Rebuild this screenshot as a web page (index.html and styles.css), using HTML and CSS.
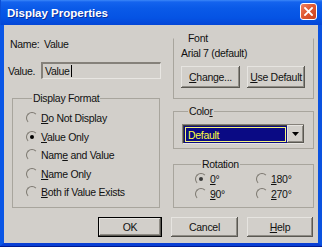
FILE: index.html
```html
<!DOCTYPE html>
<html>
<head>
<meta charset="utf-8">
<link rel="stylesheet" href="styles.css">
</head>
<body>
<div class="window">
  <div class="titlebar">
    <span class="title">Display Properties</span>
    <span class="close"><svg width="9" height="9" viewBox="0 0 9 9"><path d="M1 1 L8 8 M8 1 L1 8" stroke="#fff" stroke-width="1.8" stroke-linecap="square"/></svg></span>
  </div>
  <div class="client">
    <div class="panes">
      <div class="left">
        <div class="name-row"><span class="name-lbl">Name:</span><span>Value</span></div>
        <div class="value-row"><span class="value-lbl">Value.</span><div class="input">Value<span class="caret"></span></div></div>
        <fieldset class="group fmt">
          <legend>Display Format</legend>
          <div class="radio"><span class="rb"></span><span><u>D</u>o Not Display</span></div>
          <div class="radio"><span class="rb on"></span><span><u>V</u>alue Only</span></div>
          <div class="radio"><span class="rb"></span><span>Nam<u>e</u> and Value</span></div>
          <div class="radio"><span class="rb"></span><span><u>N</u>ame Only</span></div>
          <div class="radio"><span class="rb"></span><span><u>B</u>oth if Value Exists</span></div>
        </fieldset>
      </div>
      <div class="right">
        <fieldset class="group font">
          <legend>Font</legend>
          <div class="font-name">Arial 7 (default)</div>
          <div class="font-btns">
            <div class="btn change"><u>C</u>hange...</div>
            <div class="btn usedef"><u>U</u>se Default</div>
          </div>
        </fieldset>
        <fieldset class="group color">
          <legend>Colo<u>r</u></legend>
          <div class="combo">
            <div class="combo-field"><span>Default</span></div>
            <div class="combo-btn"><svg width="7" height="4" viewBox="0 0 7 4"><path d="M0 0 H7 L3.5 4 Z" fill="#000"/></svg></div>
          </div>
        </fieldset>
        <fieldset class="group rotation">
          <legend>Rotation</legend>
          <div class="rot-grid">
            <div class="radio rot"><span class="rb on dim"></span><span><u>0</u>°</span></div>
            <div class="radio rot"><span class="rb"></span><span><u>1</u>80°</span></div>
            <div class="radio rot"><span class="rb"></span><span><u>9</u>0°</span></div>
            <div class="radio rot"><span class="rb"></span><span><u>2</u>70°</span></div>
          </div>
        </fieldset>
      </div>
    </div>
    <div class="buttons">
      <div class="btn ok">OK</div>
      <div class="btn cancel">Cancel</div>
      <div class="btn help"><u>H</u>elp</div>
    </div>
  </div>
</div>
</body>
</html>
```
FILE: styles.css
```css
* { box-sizing: border-box; }
html, body { margin: 0; padding: 0; }
body {
  width: 322px;
  height: 247px;
  overflow: hidden;
  font-family: "Liberation Sans", Arial, sans-serif;
  font-size: 10.5px;
  letter-spacing: -0.3px;
  color: #111;
  background: #d2cfca;
}
u { text-decoration: underline; text-underline-offset: 1px; }

.window {
  width: 322px;
  height: 247px;
  display: flex;
  flex-direction: column;
  border-bottom: 1px solid #001a8f;
}

.titlebar {
  height: 25px;
  flex: none;
  display: flex;
  align-items: flex-start;
  justify-content: space-between;
  background: linear-gradient(#3b87f8 0px, #1463ee 2px, #0a5ae8 8px, #0553e4 18px, #0446d6 25px);
  border-left: 1px solid #0a4fd8;
}
.title {
  color: #fff;
  font-weight: bold;
  font-size: 11.5px;
  letter-spacing: 0;
  padding: 6px 0 0 6px;
  line-height: 14px;
  text-shadow: 1px 1px #0a2e9c;
}
.close {
  width: 17px;
  height: 17px;
  margin: 3px 5px 0 0;
  border: 1px solid #fff;
  border-radius: 3px;
  background: linear-gradient(135deg, #ef8163, #e05a32 45%, #cc4420);
  display: flex;
  align-items: center;
  justify-content: center;
}

.client {
  flex: 1;
  display: flex;
  flex-direction: column;
  background: #d2cfca;
  border-left: 4px solid #0a56e6;
  border-right: 4px solid #0a52e0;
  border-bottom: 3px solid #0a3fd4;
}

.panes {
  display: flex;
  gap: 10px;
}
.left { width: 159px; }
.right { width: 141px; }

.name-row {
  margin-top: 13px;
  height: 13px;
  line-height: 13px;
  padding-left: 6px;
  display: flex;
}
.name-lbl { width: 34px; }

.value-row {
  margin-top: 11px;
  height: 17px;
  display: flex;
  align-items: center;
  padding-left: 4px;
}
.value-lbl { width: 33px; }
.input {
  width: 120px;
  height: 17px;
  border-top: 2px solid #85817a;
  border-left: 2px solid #85817a;
  border-right: 1px solid #e8e6e2;
  border-bottom: 1px solid #e8e6e2;
  background: #d2cfca;
  padding-left: 2px;
  line-height: 14px;
  display: flex;
  align-items: center;
}
.caret {
  display: inline-block;
  width: 1px;
  height: 12px;
  background: #000;
  margin-left: 1px;
}

.group {
  margin: 0;
  border: 1px solid #a8a59d;
  padding: 0;
  min-width: 0;
}
.group legend {
  padding: 0 1px;
  margin-left: 6px;
  line-height: 13px;
  height: 13px;
}

.fmt {
  margin: 13px 0 0 8px;
  width: 148px;
  height: 116px;
  padding: 4px 0 0 13px;
}

.radio {
  display: flex;
  align-items: center;
  height: 18.5px;
  gap: 3px;
  white-space: nowrap;
}
.rb {
  width: 12px;
  height: 12px;
  border-radius: 50%;
  border: 1px solid;
  border-color: #7c7870 transparent transparent #7c7870;
  position: relative;
  flex: none;
}
.rb.on::after {
  content: "";
  position: absolute;
  left: 3px;
  top: 3px;
  width: 4px;
  height: 4px;
  border-radius: 50%;
  background: #000;
}
.rb.dim.on::after { background: #3a3a3a; }

.font {
  margin-top: 7px;
  height: 67px;
  border-top-color: transparent;
  padding: 1.5px 0 0 7px;
}
.font-name {
  line-height: 13px;
  height: 13px;
}
.font-btns {
  margin-top: 6.5px;
  display: flex;
  gap: 7px;
}

.btn {
  height: 22px;
  display: flex;
  align-items: center;
  justify-content: center;
  white-space: nowrap;
  background: #d2cfca;
  box-shadow: inset -1px -1px #5a5852, inset 1px 1px #e6e4e0, inset -2px -2px #8f8c85;
}
.change { width: 59px; }
.usedef { width: 58px; }

.color {
  margin-top: 5.5px;
  height: 44.5px;
  padding: 6.5px 0 0 8px;
}
.combo {
  width: 122px;
  height: 20px;
  display: flex;
  border-top: 1px solid #85817a;
  border-left: 1px solid #85817a;
  border-bottom: 1px solid #e8e6e2;
}
.combo-field {
  flex: 1;
  background: #0a0a84;
  padding: 1px;
  border-top: 1px solid #404040;
  border-left: 1px solid #404040;
}
.combo-field span {
  display: flex;
  align-items: center;
  height: 100%;
  border: 1px solid #f4f47a;
  color: #ffff40;
  padding-left: 2px;
}
.combo-btn {
  width: 17px;
  display: flex;
  align-items: center;
  justify-content: center;
  background: #d2cfca;
  box-shadow: inset -1px -1px #5a5852, inset 1px 1px #e6e4e0, inset -2px -2px #8f8c85;
}

.rotation {
  margin-top: 8.5px;
  height: 50.5px;
  padding: 0.5px 0 0 21px;
}
.rot-grid {
  display: grid;
  grid-template-columns: 61px 61px;
}
.radio.rot { height: 15px; }

.buttons {
  margin-top: 9px;
  display: flex;
  justify-content: flex-end;
  gap: 9px;
  padding-right: 5px;
}
.ok {
  width: 64px;
  height: 20px;
  border: 1px solid #000;
}
.cancel { width: 67px; height: 20px; }
.help { width: 66px; height: 20px; }
```
